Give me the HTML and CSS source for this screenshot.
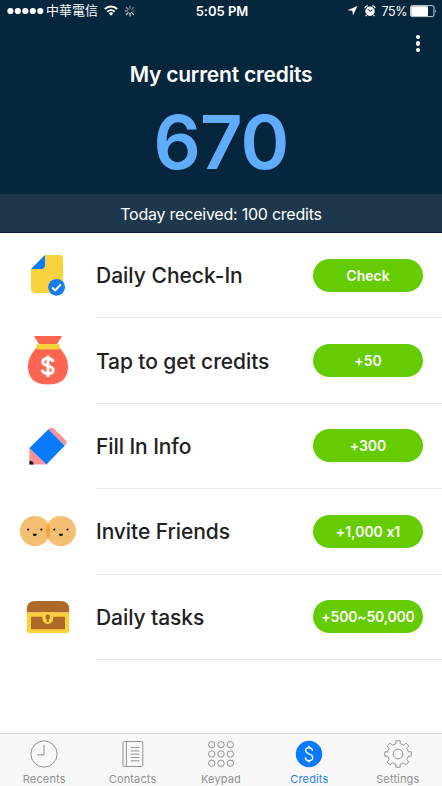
FILE: index.html
```html
<!DOCTYPE html>
<html lang="en">
<head>
<meta charset="utf-8">
<title>Credits</title>
<link rel="stylesheet" href="styles.css">
</head>
<body>
<div class="app">
  <header class="header">
    <div class="status">
      <div class="status-left">
        <svg class="signal" width="37" height="22" viewBox="0 0 37 22" fill="#fff"><circle cx="3.4" cy="11" r="3.1"/><circle cx="10.8" cy="11" r="3.1"/><circle cx="18.3" cy="11" r="3.1"/><circle cx="25.8" cy="11" r="3.1"/><circle cx="33.3" cy="11" r="3.1"/></svg>
        <span class="carrier">中華電信</span>
        <svg class="wifi" width="14" height="22" viewBox="0 0 14 22" fill="none" stroke="#fff" stroke-width="2"><path d="M.9 9a8.7 8.7 0 0 1 12.2 0M3.3 11.7a5.3 5.3 0 0 1 7.4 0"/><path d="M7 15.7 4.8 13.4a3.2 3.2 0 0 1 4.4 0Z" fill="#fff" stroke="none"/></svg>
        <svg class="spinner" width="12" height="22" viewBox="-6 -11 12 22" stroke-width="1.2" stroke-linecap="round"><path d="M0-2.4V-5" stroke="#75869a"/><path d="M1.7-1.7 3.5-3.5" stroke="#64768a"/><path d="M2.4 0H5" stroke="#536a7d"/><path d="M1.7 1.7 3.5 3.5" stroke="#fff"/><path d="M0 2.4V5" stroke="#e2e6ea"/><path d="M-1.7 1.7-3.5 3.5" stroke="#c4ccd3"/><path d="M-2.4 0H-5" stroke="#a7b3bd"/><path d="M-1.7-1.7-3.5-3.5" stroke="#8b9aa8"/></svg>
      </div>
      <span class="time">5:05 PM</span>
      <div class="status-right">
        <svg width="11" height="22" viewBox="0 0 11 22" fill="#fff"><path d="M10.4 5.9 6 15.6 5.4 10.8.5 10.3Z"/></svg>
        <svg class="alarm" width="12" height="22" viewBox="0 0 12 22"><circle cx="6" cy="11.3" r="4.7" fill="#fff"/><path d="M.9 8.1a2.6 2.6 0 0 1 3-2.2M8.1 5.9a2.6 2.6 0 0 1 3 2.2M2.6 15l-1 1M9.4 15l1 1" fill="none" stroke="#fff" stroke-width="1.2"/><path d="M3.9 9.1 6 11.5l2.4-1.7" fill="none" stroke="#05263d"/></svg>
        <span class="percent">75%</span>
        <svg class="battery" width="27" height="22" viewBox="0 0 27 22"><rect x=".5" y="5.6" width="23.5" height="11" rx="1.7" fill="none" stroke="#fff" stroke-width=".8"/><rect x="1.2" y="6.3" width="16.8" height="9.6" rx=".6" fill="#fff"/><path d="M25 9.2q1.3 1.9 0 3.8Z" fill="#fff"/></svg>
      </div>
    </div>
    <div class="menu"><i></i><i></i><i></i></div>
    <h1 class="title">My current credits</h1>
    <div class="amount">670</div>
    <div class="today"><span>Today received: 100 credits</span></div>
  </header>

  <main class="list">
    <section class="row">
      <svg class="art" viewBox="0 233 96 85"><path d="M45 255h14a4 4 0 0 1 4 4v30a4 4 0 0 1-4 4H35a4 4 0 0 1-4-4v-20l14-14Z" fill="#fad23e"/><path d="M45 255v10a4 4 0 0 1-4 4H31Z" fill="#087aff"/><circle cx="56.6" cy="287.3" r="8.4" fill="#167cf2"/><path d="m52.1 287.5 3.1 2.9 5.6-6" fill="none" stroke="#fff" stroke-width="2"/></svg>
      <div class="cell"><span class="label check-in">Daily Check-In</span><button class="pill">Check</button></div>
    </section>
    <section class="row">
      <svg class="art" viewBox="0 318.4 96 85"><path d="M34 336.4h28l-5.5 9c7 6.2 11.5 13.4 11.5 21.5C68 380 60 385 48 385s-20-5-20-18.1c0-8.1 4.5-15.3 11.5-21.5Z" fill="#ff6550"/><rect x="36" y="344.4" width="24" height="5.6" rx="2.8" fill="#fad23e"/><path d="M53.1 362.4c-.4-2.2-2.4-3.4-5.3-3.4-3.1 0-5 1.3-5 3.5 0 5.2 10.4 2.4 10.4 7.9 0 2.4-2 3.7-5.3 3.7s-5.2-1.3-5.7-3.9M48 355.8v21.5" fill="none" stroke="#fff" stroke-width="3"/></svg>
      <div class="cell"><span class="label">Tap to get credits</span><button class="pill">+50</button></div>
    </section>
    <section class="row">
      <svg class="art" viewBox="0 403.8 96 85"><path d="m48.5 429 1.6-1a3.6 3.6 0 0 1 4 .7L65.8 440a3.6 3.6 0 0 1 .4 4l-1.6 1.5Z" fill="#ff9194"/><path d="M29.3 447.6V464.4h17.2Z" fill="#ff9194"/><path d="m48.5 429 16.1 16.5L46.4 464.2 29.4 447.8Z" fill="#087aff"/><path d="M29.3 461.2q1.4-1.5 2.3.2 2-.2 2 3h-4.3Z" fill="#111"/></svg>
      <div class="cell"><span class="label">Fill In Info</span><button class="pill">+300</button></div>
    </section>
    <section class="row">
      <svg class="art" viewBox="0 489.2 96 85"><circle cx="35" cy="531.2" r="15.1" fill="#f4bf72"/><circle cx="60.9" cy="531.2" r="15.1" fill="#f4bf72"/><path d="M48 523.4a15.1 15.1 0 0 1 0 15.6 15.1 15.1 0 0 1 0-15.6Z" fill="#efa733"/><g fill="#111"><circle cx="28.1" cy="529.8" r="1.1"/><circle cx="41.4" cy="529.8" r="1.1"/><circle cx="54.3" cy="529.8" r="1.1"/><circle cx="67.5" cy="529.8" r="1.1"/><path d="M32.6 534h4.5q-.5 2.4-2.3 2.4t-2.2-2.4ZM58.7 534h4.5q-.5 2.4-2.3 2.4t-2.2-2.4Z"/></g></svg>
      <div class="cell"><span class="label">Invite Friends</span><button class="pill">+1,000 x1</button></div>
    </section>
    <section class="row">
      <svg class="art" viewBox="0 574.6 96 85"><path d="M26.8 612v-3.8a7.5 7.5 0 0 1 7.5-7.5h27.4a7.5 7.5 0 0 1 7.5 7.5v3.8Z" fill="#ac692a"/><path d="M26.8 612h42.4v18.6a2 2 0 0 1-2 2H28.8a2 2 0 0 1-2-2Z" fill="#fad23e"/><rect x="31" y="616.3" width="34" height="12.6" rx=".8" fill="#ac692a"/><path d="M42.4 612h10.8v6.1a5.4 5.4 0 0 1-10.8 0Z" fill="#fad23e"/><circle cx="47.8" cy="616.6" r="2.4" fill="#ac692a"/><path d="M47 617h1.6l.4 4.3h-2.4Z" fill="#ac692a"/></svg>
      <div class="cell"><span class="label">Daily tasks</span><button class="pill wide">+500~50,000</button></div>
    </section>
  </main>

  <nav class="tabs">
    <a class="tab"><svg viewBox="0 0 28 28"><circle cx="14" cy="14" r="13.1"/><path d="M14 4.8v10.1H7.3"/></svg><span>Recents</span></a>
    <a class="tab"><svg viewBox="0 0 28 28"><rect x="4" y="1.5" width="19.8" height="25" rx="1.5"/><path d="M7.4 1.5v25M11.7 7.6h8.8M11.7 10.9h8.8M11.7 14.2h8.8M11.7 17.5h8.8M11.7 20.8h8.8"/></svg><span>Contacts</span></a>
    <a class="tab"><svg viewBox="0 0 28 28"><circle cx="4.7" cy="4.7" r="3.2"/><circle cx="14" cy="4.7" r="3.2"/><circle cx="23.3" cy="4.7" r="3.2"/><circle cx="4.7" cy="14" r="3.2"/><circle cx="14" cy="14" r="3.2"/><circle cx="23.3" cy="14" r="3.2"/><circle cx="4.7" cy="23.3" r="3.2"/><circle cx="14" cy="23.3" r="3.2"/><circle cx="23.3" cy="23.3" r="3.2"/></svg><span>Keypad</span></a>
    <a class="tab active"><svg viewBox="0 0 28 28"><circle class="disc" cx="14" cy="14" r="13.2"/><path class="dollar" d="M17.5 10.7c-.2-2-1.5-3-3.5-3s-3.4 1.1-3.4 2.9c0 4.1 7.1 2.6 7.1 7 0 2-1.4 3.1-3.6 3.1s-3.6-1.1-3.8-3.3M14 5.8v2M14 20.6v2"/></svg><span>Credits</span></a>
    <a class="tab"><svg viewBox="-14 -14 28 28"><path d="M-2.2-10.2V-13.2H2.2V-10.2Q4-9.8 5.66-8.77L7.78-10.89 10.89-7.78 8.77-5.66Q9.8-4 10.2-2.2H13.2V2.2H10.2Q9.8 4 8.77 5.66L10.89 7.78 7.78 10.89 5.66 8.77Q4 9.8 2.2 10.2V13.2H-2.2V10.2Q-4 9.8-5.66 8.77L-7.78 10.89-10.89 7.78-8.77 5.66Q-9.8 4-10.2 2.2H-13.2V-2.2H-10.2Q-9.8-4-8.77-5.66L-10.89-7.78-7.78-10.89-5.66-8.77Q-4-9.8-2.2-10.2Z"/><circle r="4.9"/></svg><span>Settings</span></a>
  </nav>
</div>
</body>
</html>
```

FILE: styles.css
```css
* { box-sizing: border-box; }
body {
  margin: 0;
  background: #fff;
  font-family: Inter, "Noto Sans CJK TC", sans-serif;
  font-feature-settings: "calt" 0;
  color: #212121;
}
.app { display: flex; flex-direction: column; height: 786px; overflow: hidden; }
svg { display: block; flex: none; }

.header {
  display: flex;
  flex-direction: column;
  height: 233px;
  background: #05263d;
  color: #fff;
  border-bottom: 1px solid #071a31;
}
.status {
  display: grid;
  grid-template-columns: 1fr auto 1fr;
  grid-template-rows: 22px;
  height: 22px;
  line-height: 22px;
  padding: 0 5px 0 7px;
}
.status-left, .status-right { display: flex; align-items: center; }
.status-right { justify-content: flex-end; }
.carrier { margin-left: 2px; padding-bottom: 2px; line-height: 20px; font-size: 13px; font-family: "Noto Sans CJK TC", sans-serif; }
.wifi { margin-left: 6px; }
.spinner { margin-left: 6px; }
.time { font-size: 13px; font-weight: 600; }
.alarm { margin-left: 6px; }
.percent { margin-left: 5px; padding-top: 1px; font-size: 12.5px; letter-spacing: -.4px; }
.battery { margin-left: 3px; }

.menu {
  display: flex;
  flex-direction: column;
  align-self: flex-end;
  gap: 2px;
  padding: 13px 22px 0 0;
  height: 39px;
}
.menu i { width: 4.4px; height: 4.4px; border-radius: 50%; background: #fff; }
.title { margin: 0; height: 28px; line-height: 28px; text-align: center; font-size: 21px; font-weight: 600; letter-spacing: -.22px; }
.amount { height: 105px; line-height: 106px; text-align: center; color: #60adff; font-size: 74px; font-weight: 600; letter-spacing: -.8px; }
.today {
  flex: 1;
  display: flex;
  align-items: center;
  justify-content: center;
  padding-top: 2px;
  background: #1d384c;
  font-size: 16px;
  letter-spacing: -.23px;
}

.list { flex: 1; }
.row { display: flex; height: 85.4px; }
.art { width: 96px; height: 85px; }
.cell {
  flex: 1;
  display: flex;
  align-items: center;
  justify-content: space-between;
  padding-right: 19px;
  border-bottom: 1px solid #e8e8e8;
}
.label { padding-top: 1px; font-size: 21px; font-weight: 500; letter-spacing: -.08px; white-space: nowrap; }
.check-in { letter-spacing: 0; }
.pill {
  width: 110px;
  height: 33px;
  padding: 0;
  border: 0;
  border-radius: 17px;
  background: #66cc02;
  color: #fff;
  font-family: inherit;
  font-size: 14px;
  font-weight: 600;
  font-feature-settings: "calt" 0;
  white-space: nowrap;
}
.wide { letter-spacing: -.2px; }

.tabs {
  display: grid;
  grid-template-columns: repeat(5, 1fr);
  height: 53px;
  background: #f8f8f8;
  border-top: 1px solid #dadada;
}
.tab {
  display: flex;
  flex-direction: column;
  align-items: center;
  padding-top: 6px;
  color: #929292;
  font-size: 11px;
  line-height: 14px;
  letter-spacing: .15px;
}
.tab svg { width: 28px; height: 28px; margin-bottom: 4px; fill: none; stroke: currentColor; stroke-width: 1; }
.active { color: #2e7df0; }
.tab .disc { fill: #087aff; stroke: none; }
.tab .dollar { stroke: #fff; stroke-width: 1.4; }
```
